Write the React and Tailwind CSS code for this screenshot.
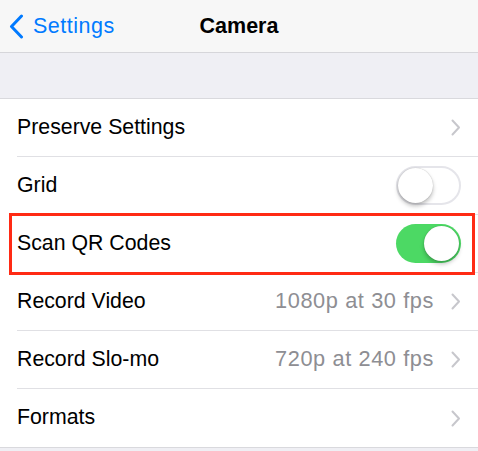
import React from "react";

const font = { fontFamily: '"Liberation Sans", Arial, sans-serif' };

const Chevron = () => (
  <svg width="10" height="17" viewBox="0 0 10 17" className="shrink-0">
    <path d="M1.5 1.5 L8 8.5 L1.5 15.5" fill="none" stroke="#c7c7cc" strokeWidth="2" strokeLinecap="round" strokeLinejoin="round" />
  </svg>
);

const Toggle = ({ on }) => (
  <div
    className={`relative w-[65px] h-[39px] rounded-full ${
      on ? "bg-[#4cd964]" : "bg-white border-2 border-[#e5e5ea]"
    }`}
  >
    <div
      className={`absolute w-[35px] h-[35px] rounded-full bg-white shadow-[0_3px_4px_rgba(0,0,0,0.25),0_0_1px_rgba(0,0,0,0.3)] ${
        on ? "top-[2px] right-[2px]" : "top-[0px] left-[0px]"
      }`}
    />
  </div>
);

const Row = ({ label, value, toggle, last, highlight }) => (
  <div className="relative h-[58px] pl-[17px]">
    <div
      className={`h-full flex items-center pr-[17px] ${
        last ? "" : "border-b border-[#e0e0e4]"
      }`}
    >
      <span className="flex-1 text-[21.3px] text-black">{label}</span>
      {value && (
        <span className="text-[21.75px] tracking-[0.6px] text-[#8e8e93] mr-[17px]">{value}</span>
      )}
      {toggle !== undefined ? <Toggle on={toggle} /> : <Chevron />}
    </div>
    {highlight && (
      <div className="absolute left-[9px] right-[3px] -top-[2px] -bottom-[2px] border-[3px] border-[#ff2a14]" />
    )}
  </div>
);

export default function App() {
  return (
    <div className="w-[478px] h-[451px] bg-[#efeff4] overflow-hidden" style={font}>
      {/* Nav bar */}
      <div className="h-[53px] bg-[#f7f7f7] border-b border-[#d6d6da] grid grid-cols-[1fr_auto_1fr] items-center">
        <div className="flex items-center gap-[9px] pl-[9px] text-[#007aff]">
          <svg width="15" height="25" viewBox="0 0 15 25">
            <path d="M12.5 2 L2.5 12.5 L12.5 23" fill="none" stroke="#007aff" strokeWidth="3" strokeLinecap="round" strokeLinejoin="round" />
          </svg>
          <span className="text-[21.5px] tracking-[0.5px]">Settings</span>
        </div>
        <div className="text-[21.5px] font-bold text-black">Camera</div>
        <div />
      </div>

      <div className="h-[45px]" />

      {/* List */}
      <div className="bg-white border-t border-b border-[#d9d9dd]">
        <Row label="Preserve Settings" />
        <Row label="Grid" toggle={false} />
        <Row label="Scan QR Codes" toggle={true} highlight />
        <Row label="Record Video" value="1080p at 30 fps" />
        <Row label="Record Slo-mo" value="720p at 240 fps" />
        <Row label="Formats" last />
      </div>
    </div>
  );
}
